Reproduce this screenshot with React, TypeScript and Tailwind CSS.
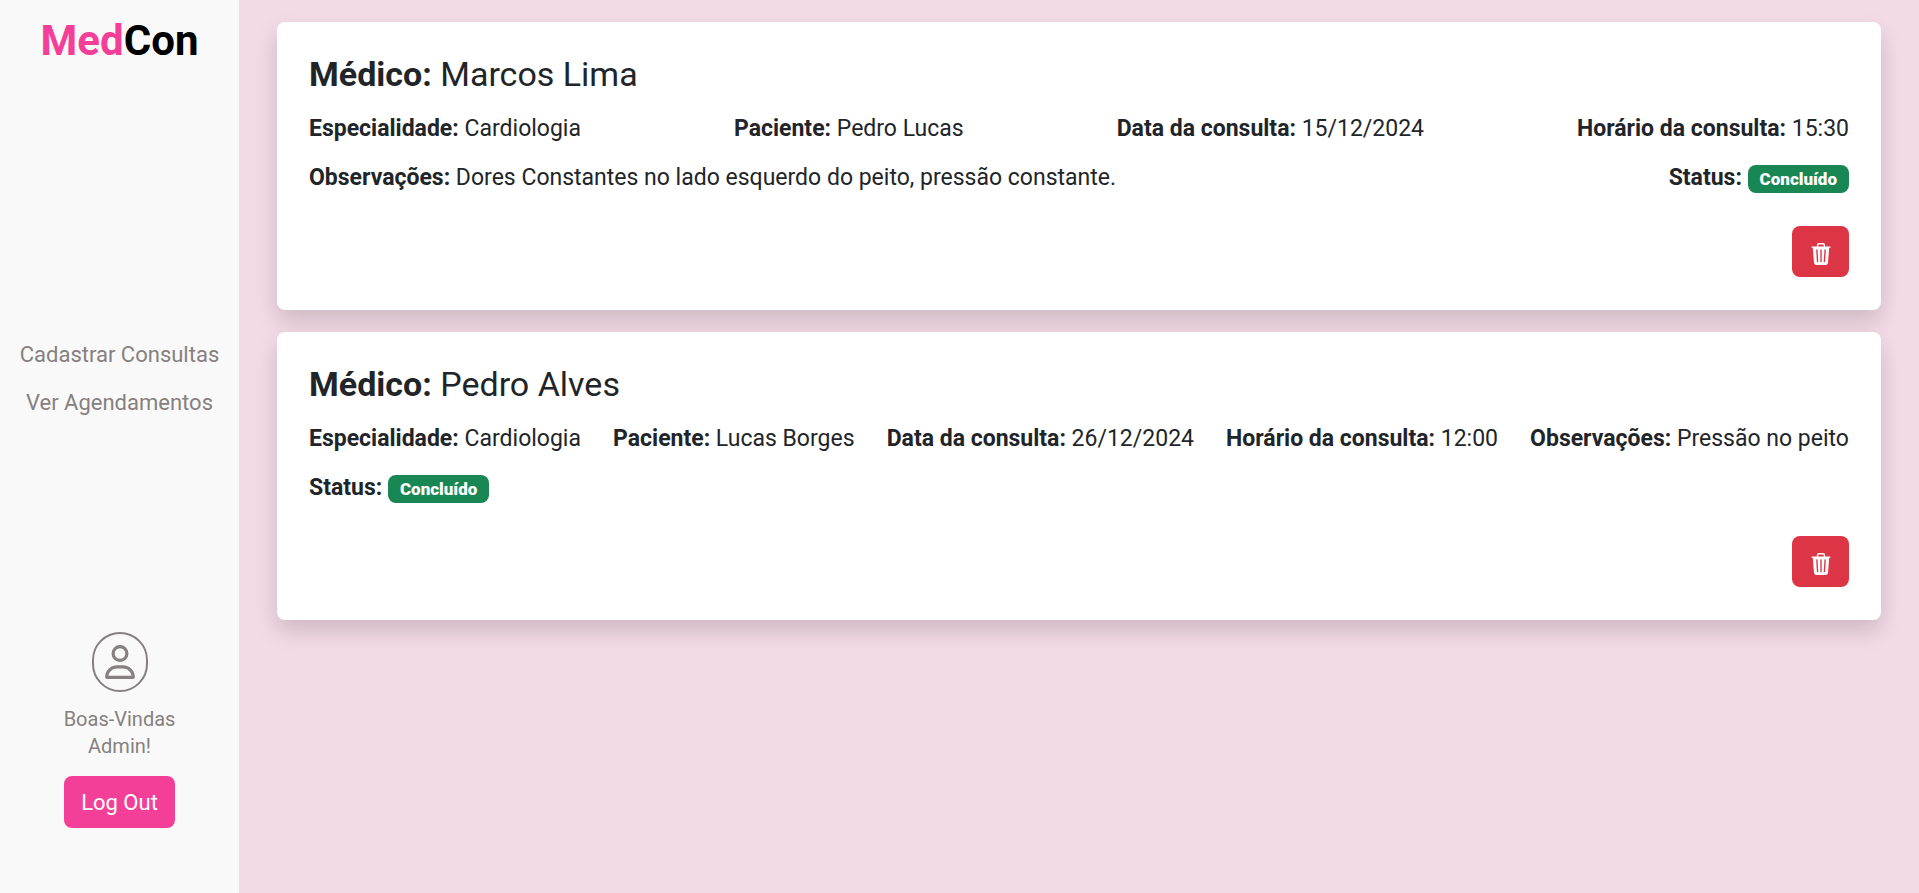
import { BsTrash3Fill } from "react-icons/bs";
import { FaRegUser } from "react-icons/fa6";

type Field = { label: string; value: string };
type Appointment = { doctor: string; fields: Field[]; status: string };

const appointments: Appointment[] = [
  {
    doctor: "Marcos Lima",
    fields: [
      { label: "Especialidade:", value: "Cardiologia" },
      { label: "Paciente:", value: "Pedro Lucas" },
      { label: "Data da consulta:", value: "15/12/2024" },
      { label: "Horário da consulta:", value: "15:30" },
      {
        label: "Observações:",
        value: "Dores Constantes no lado esquerdo do peito, pressão constante.",
      },
    ],
    status: "Concluído",
  },
  {
    doctor: "Pedro Alves",
    fields: [
      { label: "Especialidade:", value: "Cardiologia" },
      { label: "Paciente:", value: "Lucas Borges" },
      { label: "Data da consulta:", value: "26/12/2024" },
      { label: "Horário da consulta:", value: "12:00" },
      { label: "Observações:", value: "Pressão no peito" },
    ],
    status: "Concluído",
  },
];

function Sidebar() {
  return (
    <aside className="flex w-[239px] shrink-0 flex-col items-center justify-between bg-[#f9f9f9] pt-4 pb-[65px] text-[#868080]">
      <h1 className="text-[42px] leading-[50px] font-bold text-black">
        <span className="text-[#f43f98]">Med</span>Con
      </h1>
      <nav className="flex flex-col items-center gap-[15px] pt-[58px] text-[22px] leading-[33px] whitespace-nowrap">
        <a href="#cadastrar">Cadastrar Consultas</a>
        <a href="#agendamentos">Ver Agendamentos</a>
      </nav>
      <div className="flex flex-col items-center">
        <div className="flex h-[60px] w-[56px] items-center justify-center rounded-full border-2 border-[#868080]">
          <FaRegUser className="h-[34px] w-[30px]" />
        </div>
        <p className="mt-[14px] text-center text-[20px] leading-[27px]">
          Boas-Vindas
          <br />
          Admin!
        </p>
        <button
          type="button"
          className="mt-4 h-[52px] w-[111px] rounded-lg bg-[#f43f98] text-[22px] leading-[33px] text-white"
        >
          Log Out
        </button>
      </div>
    </aside>
  );
}

function AppointmentCard({ doctor, fields, status }: Appointment) {
  return (
    <article className="rounded-lg bg-white px-8 py-[33px] shadow-[0_11px_22px_rgba(0,0,0,0.15)]">
      <h2 className="text-[34px] leading-[38px]">
        <strong>Médico:</strong> {doctor}
      </h2>
      <div className="mt-[19px] flex flex-wrap justify-between gap-x-7 gap-y-4 text-[23px] leading-[33px]">
        {fields.map((field) => (
          <p key={field.label}>
            <strong>{field.label}</strong> {field.value}
          </p>
        ))}
        <p>
          <strong>Status:</strong>{" "}
          <span className="inline-block rounded-lg bg-[#198754] px-3 py-[6px] align-baseline text-[17px] leading-[16px] font-black text-white">
            {status}
          </span>
        </p>
      </div>
      <div className="mt-8 flex justify-end">
        <button
          type="button"
          aria-label="Excluir consulta"
          className="flex h-[51px] w-[57px] items-center justify-center rounded-lg bg-[#dc3545] pt-1 text-white"
        >
          <BsTrash3Fill className="size-[22px]" />
        </button>
      </div>
    </article>
  );
}

export default function App() {
  return (
    <div className="flex min-h-screen bg-[#f2dae6] font-[Roboto,sans-serif] text-[#212529]">
      <Sidebar />
      <main className="flex min-w-0 flex-1 flex-col gap-[22px] px-[38px] py-[22px]">
        {appointments.map((appointment) => (
          <AppointmentCard key={appointment.doctor} {...appointment} />
        ))}
      </main>
    </div>
  );
}
